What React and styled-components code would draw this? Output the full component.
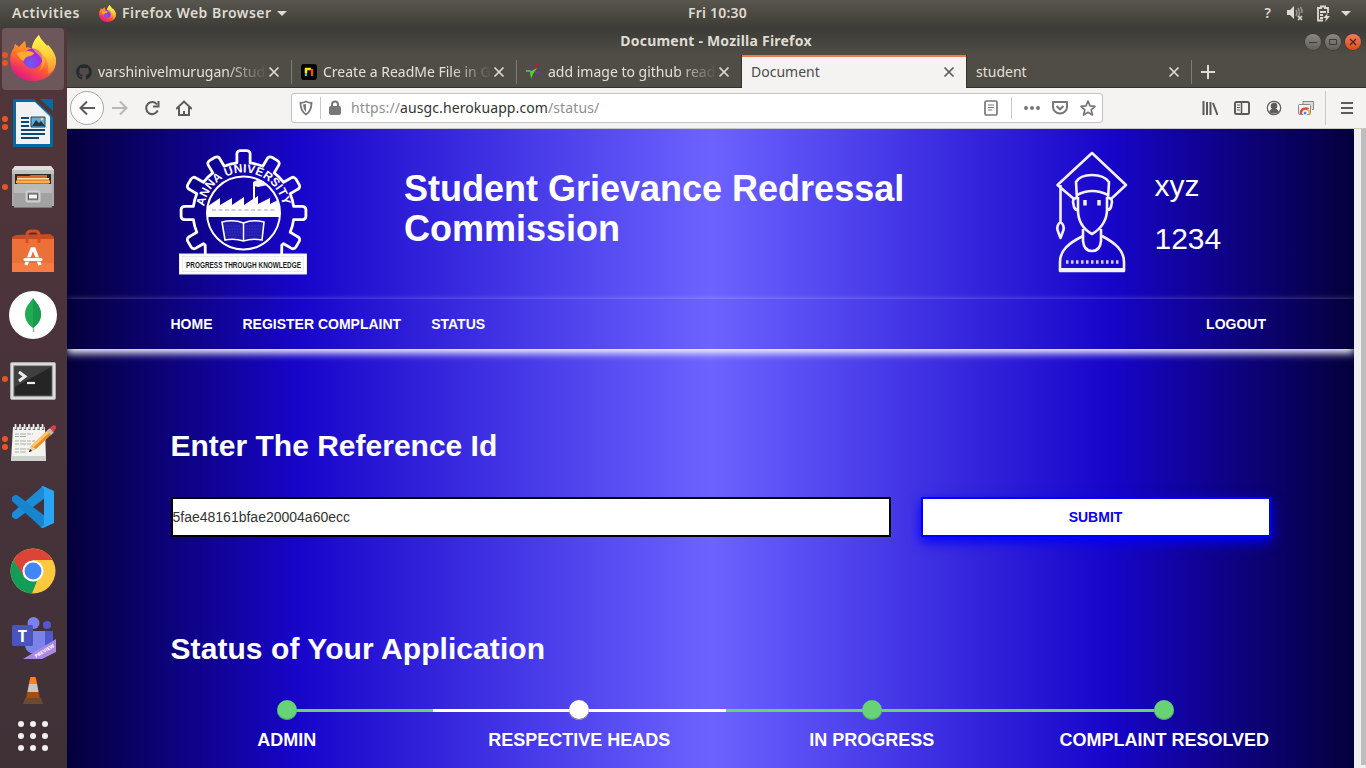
import React from "react";
import styled, { createGlobalStyle, css } from "styled-components";
import { FaGithub } from "react-icons/fa";

const Global = createGlobalStyle`
  * { box-sizing: border-box; }
  html, body { margin: 0; padding: 0; width: 1366px; height: 768px; overflow: hidden; }
  body { font-family: "Noto Sans", "Open Sans", sans-serif; }
  svg { display: block; flex: none; }
`;

const Desktop = styled.div`
  width: 1366px;
  height: 768px;
  display: flex;
  flex-direction: column;
  overflow: hidden;
  background: #3c3b37;
`;

/* ---------- system bar ---------- */
const SystemBar = styled.header`
  height: 28px;
  flex: none;
  display: grid;
  grid-template-columns: 1fr auto 1fr;
  align-items: center;
  padding: 0 15px 2px 12px;
  background: linear-gradient(#59564e, #48463f 60%, #3d3c37);
  color: #dfdbd2;
  font: 600 14px/26px "Noto Sans", sans-serif;
`;
const BarGroup = styled.div`
  display: flex;
  align-items: center;
  justify-content: ${(p) => (p.$end ? "flex-end" : "flex-start")};
  white-space: nowrap;
`;
const BarText = styled.span`
  letter-spacing: ${(p) => p.$track || 0}px;
  margin-left: ${(p) => p.$left || 0}px;
`;
const Caret = styled.i`
  border: 5px solid transparent;
  border-top-color: #dfdbd2;
  border-bottom-width: 0;
  margin-left: ${(p) => p.$left}px;
`;

const Workspace = styled.div`
  flex: 1;
  min-height: 0;
  display: flex;
`;

/* ---------- dock ---------- */
const Dock = styled.nav`
  width: 67px;
  flex: none;
  display: flex;
  flex-direction: column;
  background: linear-gradient(#51363a, #49333a 45%, #45333a 70%, #3e3136);
`;
const DockItem = styled.div`
  position: relative;
  height: ${(p) => p.$h || 64}px;
  width: 66px;
  display: flex;
  align-items: center;
  justify-content: center;
  padding-bottom: ${(p) => p.$lift ?? 2}px;
  padding-top: ${(p) => p.$drop || 0}px;
  &::before {
    content: "";
    position: absolute;
    inset: 0 2px 2px 2px;
    border-radius: 4px;
    background: ${(p) => (p.$active ? "rgba(255,255,255,.17)" : "none")};
  }
  svg { position: relative; }
`;
const Dots = styled.div`
  position: absolute;
  left: 2px;
  top: 0;
  bottom: 2px;
  display: flex;
  flex-direction: column;
  justify-content: center;
  gap: 2px;
  i { width: 6px; height: 6px; border-radius: 50%; background: #e95420; }
`;
const AppGrid = styled.div`
  display: grid;
  grid-template-columns: repeat(3, 6px);
  gap: 6px;
  i { width: 6px; height: 6px; border-radius: 50%; background: #f2f1f0; }
`;

/* ---------- browser ---------- */
const Browser = styled.main`
  flex: 1;
  min-width: 0;
  display: flex;
  flex-direction: column;
  background: #504d46;
`;
const TitleBar = styled.div`
  height: 27px;
  flex: none;
  display: grid;
  grid-template-columns: 1fr auto 1fr;
  align-items: center;
  padding: 0 5px 0 67px;
  background: linear-gradient(#3c3b37, #504d46);
  color: #dfdbd2;
  font: 700 14px/24px "Noto Sans", sans-serif;
  letter-spacing: 0.22px;
`;
const WindowTitle = styled.span`
  grid-column: 2;
  margin-left: -63px;
  padding-bottom: 2px;
`;
const WindowButtons = styled.div`
  display: flex;
  justify-content: flex-end;
  gap: 4px;
`;
const WindowButton = styled.span`
  width: 16px;
  height: 16px;
  border-radius: 50%;
  display: grid;
  place-items: center;
  box-shadow: 0 0 0 0.5px #33322e;
  background: ${(p) => (p.$close ? "linear-gradient(#f17d5a, #de4c1b)" : "linear-gradient(#8a8880, #62605a)")};
`;
const TabStrip = styled.div`
  height: 33px;
  flex: none;
  display: flex;
  border-bottom: 1px solid #33322e;
`;
const Tab = styled.div`
  width: ${(p) => p.$w || 225}px;
  flex: none;
  display: flex;
  align-items: center;
  padding: 1px 12px 0 9px;
  position: relative;
  font: 400 14px/31px "Noto Sans", sans-serif;
  color: #e4e0d8;
  ${(p) => p.$divider && css`
    &::after { content: ""; position: absolute; right: 0; top: 5px; bottom: 3px; width: 1px; background: #807d75; }
  `}
  ${(p) => p.$active && css`
    background: #f4f3f2;
    color: #4c4c4c;
    border-top: 2px solid #f1774c;
    box-shadow: -1px 0 #33322e, 1px 0 #33322e;
    height: 33px;
    line-height: 29px;
    padding: 0 11px 2px 9px;
  `}
`;
const TabLabel = styled.span`
  flex: 1;
  min-width: 0;
  overflow: hidden;
  white-space: nowrap;
  margin-left: ${(p) => (p.$icon ? 6 : p.$left || 0)}px;
  margin-right: ${(p) => (p.$icon ? 2 : 0)}px;
  ${(p) => p.$fade && css`mask-image: linear-gradient(90deg, #000 76%, transparent 101%);`}
`;
const ToolBar = styled.div`
  height: 41px;
  flex: none;
  display: flex;
  align-items: center;
  background: #f4f3f2;
  border-bottom: 1px solid #cbc8c5;
  padding: 0 12px 0 3px;
`;
const BackButton = styled.div`
  width: 34px;
  height: 34px;
  border-radius: 50%;
  border: 1px solid #aaa8a5;
  background: #fcfcfc;
  display: grid;
  place-items: center;
`;
const NavIcons = styled.div`
  display: flex;
  gap: 16px;
  margin-left: 8px;
`;
const AddressBar = styled.div`
  width: 812px;
  height: 30px;
  margin-left: 99px;
  border: 1px solid #c5c2bf;
  border-radius: 3px;
  background: #fff;
  display: flex;
  align-items: center;
  padding: 0 6px;
`;
const Rule = styled.i`
  width: 1px;
  height: ${(p) => p.$h}px;
  background: #cbc9c7;
  margin: 0 ${(p) => p.$r}px 0 ${(p) => p.$l}px;
`;
const Url = styled.span`
  flex: 1;
  margin-left: 8px;
  font: 400 14px/28px "Noto Sans", sans-serif;
  letter-spacing: 0.1px;
  color: #8f8f8f;
  b { font-weight: 400; color: #333; }
`;
const ToolIcons = styled.div`
  flex: 1;
  display: flex;
  justify-content: flex-end;
  align-items: center;
  gap: 16px;
`;

/* ---------- web page ---------- */
const Viewport = styled.div`
  flex: 1;
  min-height: 0;
  display: flex;
`;
const Scrollbar = styled.div`
  width: 12px;
  background: #f0f0f0;
  display: flex;
  justify-content: flex-end;
  padding-bottom: 3px;
  i { width: 5px; background: #bdbdbd; }
`;
const Page = styled.div`
  width: 1287px;
  overflow: hidden;
  font-family: "Liberation Sans", Arial, sans-serif;
  color: #fff;
  background: linear-gradient(90deg, #04003b 0%, #1705ca 18%, #6c63ff 50%, #1705ca 81%, #04003b 100%);
`;
const Masthead = styled.div`
  height: 170px;
  display: flex;
  padding: 0 103px;
`;
const Crest = styled.div`width: 234px; padding: 16px 0 0 8.5px;`;
const SiteTitle = styled.h1`
  margin: 40px 0 0;
  width: 650px;
  padding-right: 102px;
  font-size: 36px;
  line-height: 40px;
  font-weight: 700;
`;
const Student = styled.div`
  display: flex;
  padding-top: 20px;
  font-size: 30px;
  line-height: 33px;
`;
const StudentInfo = styled.div`
  padding: 20px 0 0 26.5px;
  display: flex;
  flex-direction: column;
  gap: 20px;
`;
const Menu = styled.div`
  height: 50px;
  display: flex;
  gap: 30px;
  align-items: center;
  padding: 0 88px 1px 103.5px;
  font-size: 14px;
  font-weight: 700;
  line-height: 20px;
  box-shadow: 0 4px 8px #fff;
`;
const MenuItem = styled.span`margin-left: ${(p) => (p.$last ? "auto" : 0)};`;
const Heading = styled.h2`
  margin: 0;
  font-size: 30px;
  line-height: 33px;
  font-weight: 700;
  letter-spacing: ${(p) => p.$track || 0}px;
`;
const Content = styled.section`padding: 80px 83px 0 103.5px;`;
const LookupForm = styled.div`
  display: flex;
  gap: 30px;
  margin: 35px 0 95px;
`;
const ReferenceBox = styled.div`
  width: 720px;
  height: 40px;
  border: 2px solid #000;
  background: #fff;
  color: #333;
  font-size: 14px;
  line-height: 36px;
`;
const SubmitButton = styled.div`
  width: 350px;
  height: 40px;
  border: 2px solid #0000fa;
  background: #fff;
  color: #0a00fa;
  font-size: 14px;
  font-weight: 700;
  line-height: 36px;
  text-align: center;
  box-shadow: 0 5px 12px #0000ff;
`;
const Steps = styled.div`
  display: flex;
  width: 1170px;
  margin: 35px 0 0 -30px;
`;
const Step = styled.div`
  width: 292.5px;
  display: flex;
  flex-direction: column;
  align-items: center;
  font-size: 18px;
  line-height: 20px;
  font-weight: 700;
  white-space: nowrap;
`;
const Track = styled.div`
  width: 100%;
  height: 20px;
  display: grid;
  place-items: center;
  margin-bottom: 10px;
  background: linear-gradient(${(p) => p.$color}, ${(p) => p.$color}) no-repeat
    ${(p) => (p.$edge === "first" ? "right 9px" : "left 9px")} / ${(p) => (p.$edge ? "50%" : "100%")} 3px;
`;
const Dot = styled.i`
  width: 20px;
  height: 20px;
  border-radius: 50%;
  background: ${(p) => p.$color};
  box-shadow: inset 0 -1px 0 ${(p) => p.$shade};
`;

/* ---------- drawings ---------- */
const FirefoxLogo = ({ size, id }) => (
  <svg width={size} height={size} viewBox="0 0 46 46">
    <defs>
      <linearGradient id={`${id}a`} x1=".85" y1=".1" x2=".3" y2="1">
        <stop offset="0" stopColor="#fff44f" /><stop offset=".3" stopColor="#ffb02e" />
        <stop offset=".6" stopColor="#ff5a36" /><stop offset="1" stopColor="#e31587" />
      </linearGradient>
      <radialGradient id={`${id}b`} cx=".4" cy=".75"><stop offset="0" stopColor="#6563ef" /><stop offset="1" stopColor="#a12ce0" /></radialGradient>
      <linearGradient id={`${id}c`} x1=".5" y1="0" x2=".6" y2="1"><stop offset="0" stopColor="#fff84f" /><stop offset=".5" stopColor="#ffd43a" /><stop offset="1" stopColor="#ff8a3d" /></linearGradient>
      <linearGradient id={`${id}d`} x1="0" y1="0" x2="0" y2="1"><stop offset="0" stopColor="#ff9a1d" /><stop offset="1" stopColor="#ff6a2d" stopOpacity="0" /></linearGradient>
    </defs>
    <path d="M29 0c1 4 5 7 8 11l1-1c5 5 8 11 8 16 0 12-10 20-23 20S0 37 0 25c0-6 2-9 4-12l1-4 4 3 6-6 1 7c2-1 4 0 6 1 0-5 3-10 7-14z" fill={`url(#${id}a)`} />
    <path d="M29 0c1 4 5 7 8 11l1-1c5 5 8 11 8 16 0 5-3 10-8 13 1-7 0-12-3-17-4-4-12-4-13-8 0-5 3-10 7-14z" fill={`url(#${id}c)`} opacity=".93" />
    <path d="M4 13l1-4 4 3 6-6 1 7c3-1 5 0 7 2L14 32 2 30c-2-7-1-13 2-17z" fill={`url(#${id}d)`} />
    <circle cx="22.500" cy="23.500" r="10" fill={`url(#${id}b)`} />
    <path d="M7 18c4-2 8-1 11-2 3 0 4 1 6 2 0 2-4 3-7 4-2 1-3 2-3 4-3-1-6-4-7-8z" fill="#ffaa2d" />
    <path d="M23 14c6-1 10 3 11 8 2 6 0 11-5 14 4-5 4-10 2-13-2-4-6-5-8-9z" fill="#ffb938" opacity=".6" />
  </svg>
);
const WriterLogo = () => (
  <svg width="42" height="48" viewBox="0 0 42 48">
    <path d="M1 0h21l19 18v30H1z" fill="#0369a3" /><path d="M28 0h13v12z" fill="#0869a3" />
    <path d="M4 3h19l15 15v27H4z" fill="#f1f1f1" /><path d="M23 3l15 15V17z" fill="#ddd" />
    <path d="M9 19h8M9 23h8M9 27h8M9 31h24M9 35h24M9 39h18" stroke="#0c4870" strokeWidth="2" />
    <path d="M19 18h14v10H19z" fill="#63afd8" stroke="#174a6b" /><path d="M20 27l4-6 3 3 2-2 4 5z" fill="#333" /><circle cx="30" cy="20" r="1.300" fill="#ffd34e" />
  </svg>
);
const FilesLogo = () => (
  <svg width="42" height="44" viewBox="0 0 42 44">
    <path d="M3 1h36l3 4v36H0V5z" fill="#aaa" /><path d="M3 1h36l3 4H0z" fill="#e0e0e0" /><path d="M0 5h42v4H0z" fill="#c2c2c2" />
    <path d="M3 9h36v13H3z" fill="#302a27" /><path d="M5 11h12l2-1h16v3h2v8H5z" fill="#d9672b" /><path d="M5 13h32v1.500H5z" fill="#ffe0a0" /><path d="M4 15.500h34v2.500H4z" fill="#ffad52" />
    <path d="M2 19h38v24H2z" fill="#a2a2a2" /><path d="M2 19h38v9H2z" fill="#bababa" /><path d="M2 42h38v1H2z" fill="#777" />
    <rect x="14.500" y="26.500" width="13" height="10" rx="1.500" fill="#999" stroke="#cfcfcf" strokeWidth="2" /><rect x="16.500" y="29" width="9" height="5" fill="#f6f6f6" stroke="#555" />
  </svg>
);
const SoftwareLogo = () => (
  <svg width="42" height="44" viewBox="0 0 42 44">
    <path d="M0 8l4-2 34-1 4 3v5H0z" fill="#c84c1e" /><path d="M0 10h42v33H0z" fill="#ee7039" /><path d="M0 34h42v9H0z" fill="#f68146" opacity=".7" />
    <path d="M15 14V6q0-4 4-4h4q4 0 4 4v8" fill="none" stroke="#d84c23" strokeWidth="3" />
    <path d="M14 36l6-16h2l6 16" fill="none" stroke="#fff" strokeWidth="3.500" /><path d="M12 30.500h18" stroke="#ee7039" strokeWidth="4.400" /><path d="M13 30.500h16" stroke="#fff" strokeWidth="3" strokeLinecap="round" />
  </svg>
);
const MongoLogo = () => (
  <svg width="48" height="48" viewBox="0 0 48 48">
    <circle cx="24" cy="24" r="24" fill="#fff" /><path d="M24.500 35v6" stroke="#aaa" strokeWidth="1.500" />
    <path d="M24 7c2 4 8 8 8 16 0 7-4 11-8 14-4-3-8-7-8-14 0-8 6-12 8-16z" fill="#20ac52" /><path d="M24 7c2 4 8 8 8 16 0 7-4 11-8 14z" fill="#1a9a4d" />
  </svg>
);
const TerminalLogo = () => (
  <svg width="46" height="38" viewBox="0 0 46 38">
    <rect x=".5" y=".5" width="45" height="37" rx="1.500" fill="#ddd" stroke="#aaa" /><rect x="4" y="4" width="38" height="30" fill="#252525" stroke="#666" />
    <path d="M5 5h36L5 25z" fill="#fff" opacity=".12" /><path d="M9 10l6 4.500L9 19" fill="none" stroke="#eee" strokeWidth="3" /><path d="M17 21h8" stroke="#eee" strokeWidth="2.200" />
  </svg>
);
const EditorLogo = () => (
  <svg width="46" height="38" viewBox="0 0 46 38">
    <path d="M3 3h32l1 34H1z" fill="#f4f4ef" /><path d="M2 32h34v5H1z" fill="#cfd2cc" />
    <path d="M6 1v5M10.500 1v5M15 1v5M19.500 1v5M24 1v5M28.500 1v5M33 1v5" stroke="#666" strokeWidth="2.400" /><path d="M5.500 0v5M10 0v5M14.500 0v5M19 0v5M23.500 0v5M28 0v5M32.500 0v5" stroke="#eee" strokeWidth="1.600" />
    <path d="M5 10h18M5 12.500h12M5 17h20M5 20h17M5 25h14M5 28h12" stroke="#aaa" strokeDasharray="4 1 6 1" />
    <path d="M19 28l2-6L39 5l4 4-17 16z" fill="#f08a1c" /><path d="M21 22L39 5l2 2-17 16z" fill="#ffc66c" /><path d="M37 7l3-3 4 4-3 3z" fill="#bbb" /><path d="M40 4q3-4 6-2 0 4-3 6z" fill="#e33e40" /><path d="M19 28l2-6 5 3z" fill="#ead0ab" /><path d="M19 28l1-3 2 2z" fill="#111" />
  </svg>
);
const CodeLogo = () => (
  <svg width="42" height="42" viewBox="0 0 42 42">
    <path d="M31 0L0 27v4l3 2h2L33 12V2z" fill="#1d8cd8" /><path d="M0 15v-4l3-2h2l28 21v11l-3 1z" fill="#1684ce" /><path d="M31 0l11 5v32l-11 5-3-1c2 0 4-1 4-3V4c0-2-1-3-3-3z" fill="#2aa5f3" />
  </svg>
);
const ChromeLogo = () => (
  <svg width="46" height="46" viewBox="0 0 46 46">
    <circle cx="23" cy="23" r="22.500" fill="#fcc93e" /><path d="M3.500 12A22.500 22.500 0 0 1 42.500 12H23L13 29z" fill="#dc4437" />
    <path d="M3.500 12L14 29q4 5 13 4l-5 12.500A22.500 22.500 0 0 1 3.500 12z" fill="#119d58" />
    <circle cx="23" cy="23" r="10.500" fill="#fff" /><circle cx="23" cy="23" r="8.500" fill="#4285f4" />
  </svg>
);
const TeamsLogo = () => (
  <svg width="46" height="44" viewBox="0 0 46 44">
    <circle cx="23.500" cy="7" r="6" fill="#7b83eb" /><circle cx="37" cy="9" r="4" fill="#5059c9" />
    <path d="M28 15h15v15q-5 7-12 3z" fill="#5059c9" /><path d="M15 15h20v17q-4 9-12 6-7-2-8-8z" fill="#7b83eb" /><rect x="2" y="9" width="21" height="21" rx="1.500" fill="#4b53bc" />
    <text x="12.500" y="25.500" textAnchor="middle" fontFamily="Open Sans" fontWeight="700" fontSize="16" fill="#fff">T</text>
    <path d="M46 23v13L32 43H13z" fill="#ac87e2" /><text x="26" y="42" transform="rotate(-31 26 42)" fontFamily="Open Sans" fontSize="5" fontWeight="700" fill="#fff">PREVIEW</text>
  </svg>
);
const VlcLogo = () => (
  <svg width="24" height="30" viewBox="0 0 24 30">
    <path d="M9 2l2-1h2l2 1 5 26H4z" fill="#a64c10" /><path d="M9.500 1h5l1.500 7H8z" fill="#ff8114" /><path d="M8 8h8l1.500 8h-11z" fill="#c8c6c2" /><path d="M4 22h16l2 6H2z" fill="#684a35" />
  </svg>
);
const G = ({ children, w = 16, h = 16, c = "#5c5b59", sw = 2, ...rest }) => (
  <svg width={w} height={h} viewBox={`0 0 ${w} ${h}`} fill="none" stroke={c} strokeWidth={sw} {...rest}>{children}</svg>
);
const SpacedGlyph = styled(G)`margin-left: ${(p) => p.$left}px;`;
const CloseGlyph = ({ c = "#dfdbd2" }) => <G w={12} h={12} c={c} sw={1.700}><path d="M1.500 1.500l9 9M10.500 1.500l-9 9" /></G>;

const teeth = Array.from({ length: 9 }, (_, i) => -120 + i * 30);
const gearPath = (() => {
  const at = (r, a) => {
    const t = (a * Math.PI) / 180;
    return `${(64.5 + r * Math.sin(t)).toFixed(1)} ${(68 - r * Math.cos(t)).toFixed(1)}`;
  };
  const parts = [`M${at(56, -137)} L${at(50, -130)}`];
  teeth.forEach((a) => {
    parts.push(`L${at(50.5, a - 7.5)} L${at(58, a - 6.5)} Q${at(62.5, a - 6.5)} ${at(62.5, a - 3)} L${at(62.5, a + 3)} Q${at(62.5, a + 6.5)} ${at(58, a + 6.5)} L${at(50.5, a + 7.5)}`);
    if (a < 120) parts.push(`A50.500 50.500 0 0 1 ${at(50.5, a + 22.5)}`);
  });
  parts.push(`L${at(50, 130)} L${at(56, 137)}`);
  return parts.join(" ");
})();

const UniversityCrest = () => (
  <svg width="132" height="132" viewBox="0 0 132 132">
    <path d={gearPath} fill="none" stroke="#fff" strokeWidth="2.800" strokeLinejoin="round" />
    <circle cx="64.500" cy="68" r="36.500" fill="none" stroke="#fff" strokeWidth="2" />
    <path id="crestArc" d="M24.800 64.500 A39.800 39.800 0 0 1 104.200 64.500" fill="none" />
    <text fill="#fff" fontFamily="Liberation Sans" fontSize="12" fontWeight="700"><textPath href="#crestArc" startOffset="3" textLength="112">ANNA UNIVERSITY</textPath></text>
    <path d="M29 61l12-8v7l12-7v7l12-8v8l9-6V37h2v16l3-2v8l12-6v6l8-4 1 8v9H29z" fill="#fff" />
    <path d="M74 37l4-2 6 1 5 4-5 1-5 1-4-1z" fill="#f4f1ff" /><path d="M33 65h64" stroke="#cfcbe8" strokeWidth="2" strokeDasharray="4 2.500" />
    <path d="M43 77q12-3 21.500 1 9-4 20.500-1l-2 18q-10-2-18.500 1-9-3-18.500-1z" fill="#211bae" stroke="#fff" strokeWidth="1.600" /><path d="M64.500 78v18" stroke="#fff" strokeWidth="1.500" />
    <path d="M46 81h16M47 84h15M47 87h15M48 90h14M67 81h15M67 84h15M67 87h14M67 90h14" stroke="#4037cc" strokeWidth="1.200" strokeDasharray="1.500 1.200" />
    <rect x=".5" y="109" width="127" height="20" fill="#fff" stroke="#eee" /><rect x="3.500" y="111.500" width="121" height="15" fill="#fff" stroke="#ddd" strokeWidth=".6" />
    <text x="7" y="122.800" textLength="115" lengthAdjust="spacingAndGlyphs" fontFamily="Liberation Sans" fontSize="9.500" fontWeight="700" fill="#1c1c1c">PROGRESS THROUGH KNOWLEDGE</text>
  </svg>
);
const Graduate = () => (
  <svg width="74" height="126" viewBox="0 0 74 126" fill="none" stroke="#f4f1ff" strokeWidth="2.600" strokeLinejoin="round">
    <path d="M20 50L3.500 36 38 4l34 32-15 14" /><path d="M6.500 36v37M6.500 73q-4 3-3 8l3 8 3-8q1-5-3-8z" />
    <path d="M23 50l-1-17q4-7 16-7t17 7l-1 17" /><path d="M23 46q15-8 31 0" /><path d="M23 49q-4 0-4 4l1 5q1 3 4 3M54 49q4 0 4 4l-1 5q-1 3-4 3" />
    <path d="M24 48v13c0 10 5 19 14 24 9-5 15-14 15-24V48" /><path d="M29 80v12q1 10 9 10t9-10V80" /><path d="M29 87C15 94 6 101 6 113v9h64v-9c0-12-9-19-22-26" />
    <path d="M6 120.500h64" strokeWidth="3" /><path d="M12 113h54" strokeDasharray="2.500 2.500" strokeWidth="3.500" opacity=".85" />
    <path d="M31 51v5.500M45 51v5.500" strokeWidth="3.500" />
  </svg>
);

const dockItems = [
  { el: <FirefoxLogo size={46} id="dock" />, dots: 2, active: true, lift: 5 }, { el: <WriterLogo />, dots: 2 },
  { el: <FilesLogo />, dots: 1 }, { el: <SoftwareLogo /> }, { el: <MongoLogo /> }, { el: <TerminalLogo />, dots: 1, lift: 0, drop: 1 },
  { el: <EditorLogo />, dots: 2, lift: 3 }, { el: <CodeLogo /> }, { el: <ChromeLogo /> }, { el: <TeamsLogo />, lift: 0, drop: 3 },
  { el: <VlcLogo />, h: 44, lift: 0, drop: 1 },
];
const steps = [
  { label: "ADMIN", edge: "first" }, { label: "RESPECTIVE HEADS", current: true },
  { label: "IN PROGRESS" }, { label: "COMPLAINT RESOLVED", edge: "last" },
];

export default function App() {
  return (
    <Desktop>
      <Global />
      <SystemBar>
        <BarGroup>
          <BarText $track={0.56}>Activities</BarText>
          <BarText $left={19}><FirefoxLogo size={17} id="bar" /></BarText>
          <BarText $left={6} $track={0.48}>Firefox Web Browser</BarText>
          <Caret $left={5} />
        </BarGroup>
        <BarText $track={0.2} $left={72}>Fri 10:30</BarText>
        <BarGroup $end>
          <BarText>?</BarText>
          <SpacedGlyph $left={15} w={18} h={18} c="#dfdbd2" sw={1.500}>
            <path d="M1 6h3l4-4v13l-4-4H1z" fill="#dfdbd2" stroke="none" /><path d="M10 6q2 3 0 6M12 4q3 5 0 9M14.500 3q2 3 1.500 6" stroke="#98958d" /><path d="M12 12l4 4M16 12l-4 4" />
          </SpacedGlyph>
          <SpacedGlyph $left={12} w={15} h={17} c="#dfdbd2" sw={1.800}>
            <path d="M12 8V3H9V1.500H5V3H2v12.500h5M4 7h6M4 10h3M4 13h3" /><path d="M12 8l-5 5h3l-1 4 5-6h-3z" fill="#dfdbd2" stroke="none" />
          </SpacedGlyph>
          <Caret $left={10} />
        </BarGroup>
      </SystemBar>
      <Workspace>
        <Dock>
          {dockItems.map((d, i) => (
            <DockItem key={i} $h={d.h} $active={d.active} $lift={d.lift} $drop={d.drop}>
              {d.el}
              {d.dots && <Dots>{Array.from({ length: d.dots }, (_, k) => <i key={k} />)}</Dots>}
            </DockItem>
          ))}
          <DockItem $h={48} $lift={0}><AppGrid>{Array.from({ length: 9 }, (_, k) => <i key={k} />)}</AppGrid></DockItem>
        </Dock>
        <Browser>
          <TitleBar>
            <WindowTitle>Document - Mozilla Firefox</WindowTitle>
            <WindowButtons>
              <WindowButton><G w={10} h={10} c="#3c3b37" sw={1}><path d="M1 5.500h8" /></G></WindowButton>
              <WindowButton><G w={10} h={10} c="#3c3b37" sw={1}><path d="M1.500 2.500h7v5h-7z" /></G></WindowButton>
              <WindowButton $close><G w={10} h={10} c="#3c2b22" sw={1.300}><path d="M2 2l6 6M8 2L2 8" /></G></WindowButton>
            </WindowButtons>
          </TitleBar>
          <TabStrip>
            <Tab $divider>
              <FaGithub size={16} color="#24292e" />
              <TabLabel $icon $fade>varshinivelmurugan/Stud</TabLabel><CloseGlyph />
            </Tab>
            <Tab $divider>
              <svg width="16" height="16" viewBox="0 0 16 16"><rect width="16" height="16" rx="3" fill="#000" /><path d="M5 12V5" stroke="#20cce0" strokeWidth="2.200" /><path d="M5 9V5h5" fill="none" stroke="#ffe500" strokeWidth="2.400" /><path d="M11 5v7" stroke="#f44a20" strokeWidth="2.400" /></svg>
              <TabLabel $icon $fade>Create a ReadMe File in G</TabLabel><CloseGlyph />
            </Tab>
            <Tab $w={225}>
              <svg width="16" height="16" viewBox="0 0 16 16" strokeWidth="1.800"><path d="M6 7L0 7" stroke="#3dcc35" /><path d="M6 7L3 2" stroke="#6b3691" /><path d="M7.500 7l4.500-7" stroke="#b51d3f" /><path d="M8 8l8 2" stroke="#673a8d" /><path d="M11 4L7 10l-2 5-1-7 5-3z" fill="#48d633" /></svg>
              <TabLabel $icon $fade>add image to github read</TabLabel><CloseGlyph />
            </Tab>
            <Tab $active $w={224}><TabLabel>Document</TabLabel><CloseGlyph c="#5c5b59" /></Tab>
            <Tab $divider $w={226}><TabLabel $left={1}>student</TabLabel><CloseGlyph /></Tab>
            <Tab $w={50}><G w={14} h={14} c="#dfdbd2"><path d="M7 0v14M0 7h14" /></G></Tab>
          </TabStrip>
          <ToolBar>
            <BackButton><G><path d="M16 8H1.500M8 1.500L1.500 8 8 14.500" /></G></BackButton>
            <NavIcons>
              <G c="#b9b7b5"><path d="M0 8h14.500M8 1.500L14.500 8 8 14.500" /></G>
              <G><path d="M13.700 10.500A6 6 0 1 1 13 4.500" /><path d="M14.500 1v5.500H9" /></G>
              <G><path d="M0 9l8-7.500L16 9M3 7v8h10V7M8 11v4" /></G>
            </NavIcons>
            <AddressBar>
              <G c="#777" sw={1.800}><path d="M8 1.500q3 1.500 5.500 1.300 0 8.500-5.500 11.700Q2.500 11.300 2.500 2.800 5 3 8 1.500z" /><path d="M8 4v8q-2.500-2-3-7.500z" fill="#777" stroke="none" /></G>
              <Rule $h={22} $l={6} $r={6} />
              <G c="#777"><path d="M5 7V4.500a3 3 0 0 1 6 0V7" /><rect x="3" y="7" width="10" height="7" fill="#777" rx="1" /></G>
              <Url>https://<b>ausgc.herokuapp.com</b>/status/</Url>
              <G c="#777" sw={1.700}><rect x="2" y="1" width="12" height="14" rx="1.500" /><path d="M5 5h6M5 7.500h6M5 10h4" strokeWidth="1" /></G>
              <Rule $h={22} $l={12} $r={11} />
              <G c="#777" w={18}><circle cx="3" cy="8" r="1" /><circle cx="9" cy="8" r="1" /><circle cx="15" cy="8" r="1" /></G>
              <SpacedGlyph $left={11} c="#777"><path d="M1 2h14v5a7 6.500 0 0 1-14 0z" strokeLinejoin="round" /><path d="M4.500 6L8 9.300 11.500 6" /></SpacedGlyph>
              <SpacedGlyph $left={12} c="#777" sw={1.700}><path d="M8 1l2 4.800 5 .5-3.800 3.500 1.200 5.200L8 12.300 3.600 15l1.200-5.200L1 6.300l5-.5z" strokeLinejoin="round" /></SpacedGlyph>
            </AddressBar>
            <ToolIcons>
              <G><path d="M1.500 1v14M5 2v13M8.500 2v13M11 3l4.500 12" /></G>
              <G><rect x="1" y="2" width="14" height="12" rx="1.500" /><path d="M7.500 2v12" strokeWidth="1.600" /><path d="M3 5h3M3 7.500h3M3 10h3" strokeWidth="1" /></G>
              <G sw={1.200}><circle cx="8" cy="8" r="6.700" /><circle cx="8" cy="6" r="2.700" fill="#5c5b59" /><path d="M4 12q0-2 2-2.500h4q2 .5 2 2.500-4 2-8 0z" fill="#5c5b59" /></G>
              <G sw={1}><path d="M5 4V1.500h10.500v8H14" stroke="#888" fill="#ddd" /><rect x=".5" y="4.500" width="12" height="10" rx="1" fill="#f4f3f2" stroke="#888" /><path d="M2.800 14q0-5.500 5-5.500 1.500 0 2.500 1" stroke="#e34a3a" strokeWidth="2.500" /><path d="M9.500 9.500q2 1.500 2 4.500" stroke="#f3bd35" strokeWidth="2" /><circle cx="7" cy="13" r="2" fill="#4285f4" stroke="#fff" /></G>
              <Rule $h={34} $l={-5} $r={-2} />
              <SpacedGlyph $left={0} w={14}><path d="M1 3h12M1 8h12M1 13h12" /></SpacedGlyph>
            </ToolIcons>
          </ToolBar>
          <Viewport>
            <Page>
              <Masthead>
                <Crest><UniversityCrest /></Crest>
                <SiteTitle>Student Grievance Redressal Commission</SiteTitle>
                <Student>
                  <Graduate />
                  <StudentInfo><span>xyz</span><span>1234</span></StudentInfo>
                </Student>
              </Masthead>
              <Menu>
                <MenuItem>HOME</MenuItem><MenuItem>REGISTER COMPLAINT</MenuItem><MenuItem>STATUS</MenuItem><MenuItem $last>LOGOUT</MenuItem>
              </Menu>
              <Content>
                <Heading>Enter The Reference Id</Heading>
                <LookupForm>
                  <ReferenceBox>5fae48161bfae20004a60ecc</ReferenceBox>
                  <SubmitButton>SUBMIT</SubmitButton>
                </LookupForm>
                <Heading $track={0.07}>Status of Your Application</Heading>
                <Steps>
                  {steps.map((s) => (
                    <Step key={s.label}>
                      <Track $edge={s.edge} $color={s.current ? "#fff" : "#68d277"}>
                        <Dot $color={s.current ? "#fff" : "#68d277"} $shade={s.current ? "#777" : "#459a5c"} />
                      </Track>
                      {s.label}
                    </Step>
                  ))}
                </Steps>
              </Content>
            </Page>
            <Scrollbar><i /></Scrollbar>
          </Viewport>
        </Browser>
      </Workspace>
    </Desktop>
  );
}
